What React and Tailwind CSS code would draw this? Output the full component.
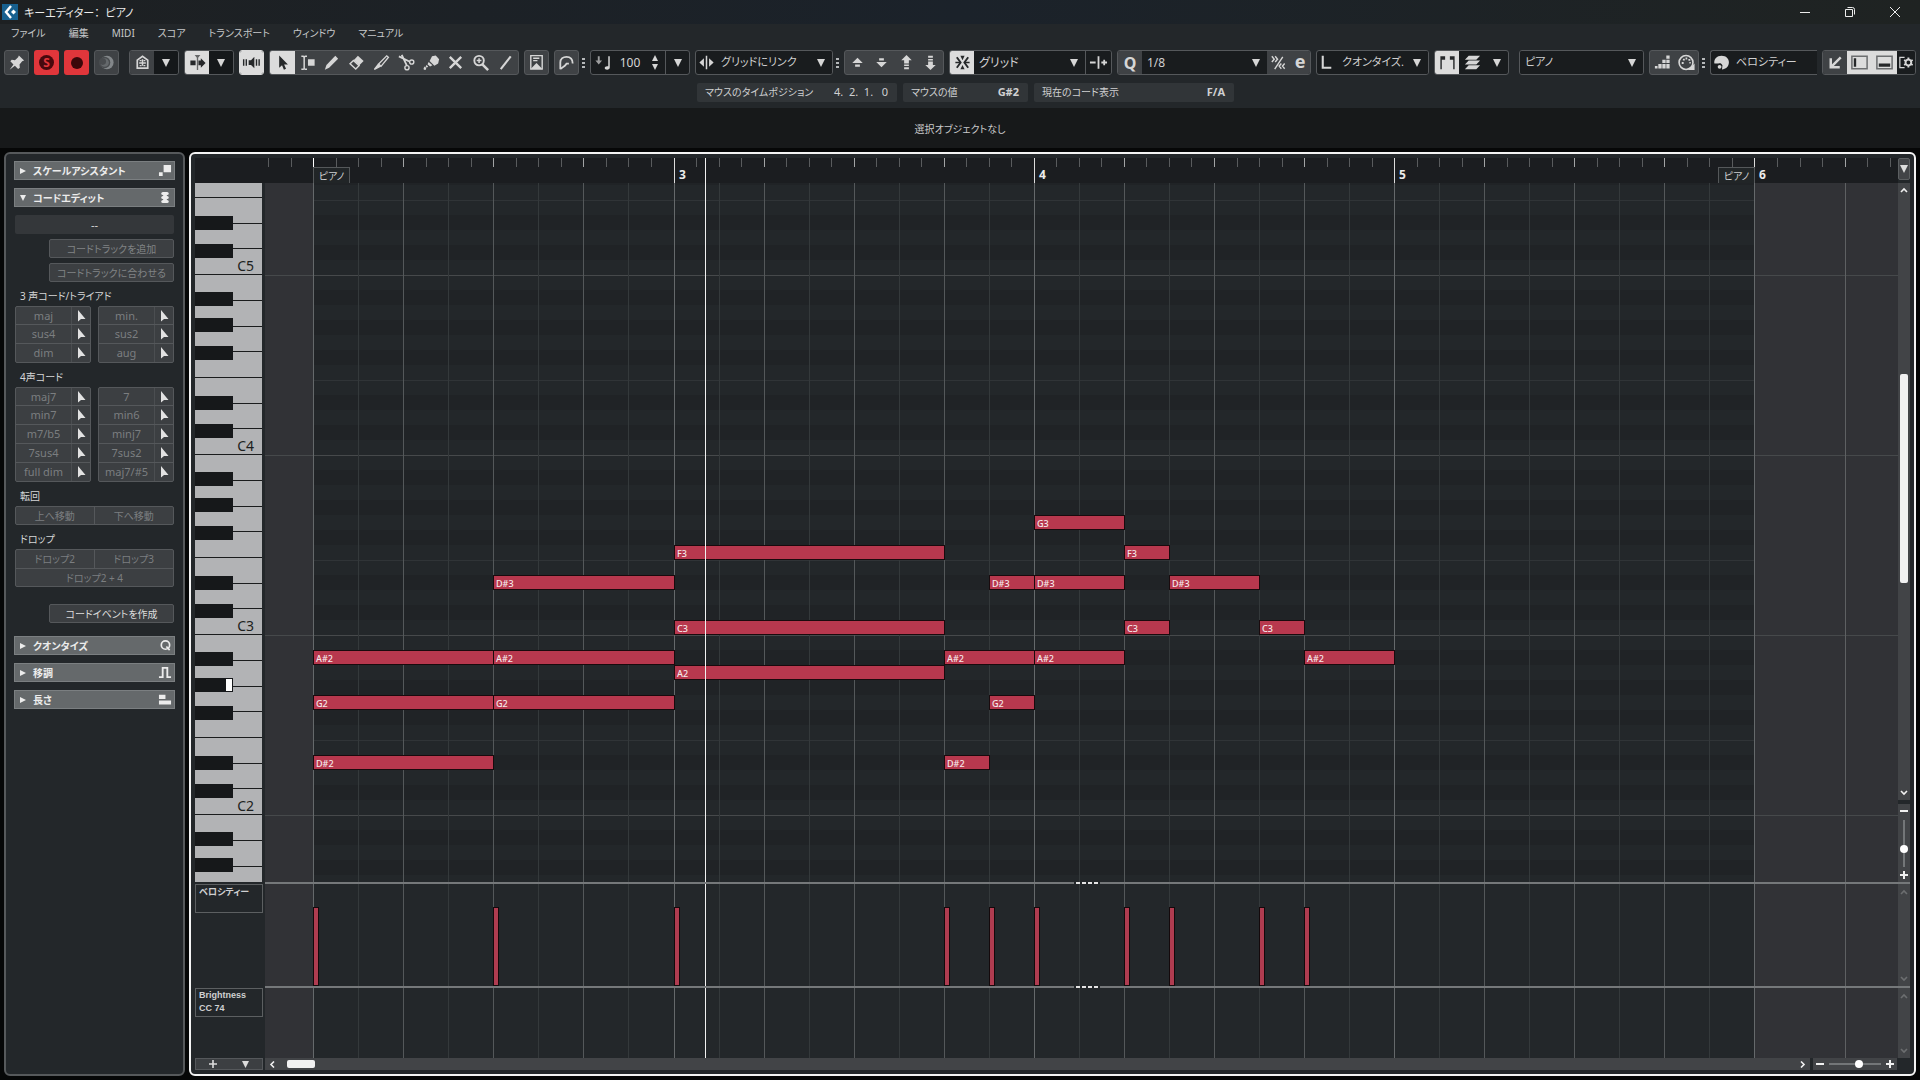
import React from "react";

/* ---------- timeline data ---------- */

const ORIGIN = 48; // left edge of the first bar inside a lane
const EIGHTH = 45.04; // width of an eighth note
const LAST = 32; // end of the part, in eighth notes
const xOf = (n) => ORIGIN + Math.round(n * EIGHTH + 0.2);

// [name, start, length] in eighth notes, row = semitones below B5
const NOTES = [
  ["G3", 16, 2, 28],
  ["F3", 8, 6, 30],
  ["F3", 18, 1, 30],
  ["D#3", 4, 4, 32],
  ["D#3", 15, 1, 32],
  ["D#3", 16, 2, 32],
  ["D#3", 19, 2, 32],
  ["C3", 8, 6, 35],
  ["C3", 18, 1, 35],
  ["C3", 21, 1, 35],
  ["A#2", 0, 4, 37],
  ["A#2", 4, 4, 37],
  ["A#2", 14, 2, 37],
  ["A#2", 16, 2, 37],
  ["A#2", 22, 2, 37],
  ["A2", 8, 6, 38],
  ["G2", 0, 4, 40],
  ["G2", 4, 4, 40],
  ["G2", 15, 1, 40],
  ["D#2", 0, 4, 44],
  ["D#2", 14, 1, 44],
];
const HITS = [0, 4, 8, 14, 15, 16, 18, 19, 21, 22];
const OCTAVES = ["C5", "C4", "C3", "C2", "C1"];
const PITCHES = ["B", "A#", "A", "G#", "G", "F#", "F", "E", "D#", "D", "C#", "C"];

/* ---------- icons, 20 x 20 ---------- */

const ICONS = {
  pin: <path fill="currentColor" d="M12.5 2.5l5.5 5.5-2 .8-2.8 3.2.3 3.5-1.8 1.3-3.4-3.4-5.5 4.3 4-5.7-3.3-3.2 1.5-1.6 3.4.3 3.3-3z" />,
  moon: (
    <g>
      <circle cx="10.5" cy="10" r="7" fill="#83878a" />
      <circle cx="8" cy="10" r="6" fill="#494c4f" />
      <circle cx="8" cy="10" r="4.5" fill="#65696c" />
      <circle cx="6" cy="9" r="3.5" fill="#494c4f" />
    </g>
  ),
  home: (
    <g fill="none" stroke="currentColor" strokeWidth="1.8">
      <path d="M4.5 16V7.5L10 3.5l5.500 4V16z" />
      <path d="M10 6.500v7M6.500 10.500h7" strokeWidth="1.500" />
      <path d="M7 8h2M11 8h2M7 13.200h2M11 13.200h2" strokeWidth="1.300" />
    </g>
  ),
  autoscroll: (
    <g fill="currentColor">
      <path d="M7 2h6l-2.300 3v13H9.300V5z" opacity=".65" />
      <path d="M2.500 8h5.500v5H2.500zM11 8h2.500V5.500l5 5-5 5V13H11z" />
    </g>
  ),
  speaker: (
    <g fill="currentColor">
      <path d="M7 7.500h2.500L13 4v12l-3.500-3.500H7z" />
      <path d="M1 6.500h1.500v7H1zM3.800 6.500h1.500v7H3.800zM14.500 6.500H16v7h-1.500zM17.300 6.500h1.500v7h-1.500z" />
    </g>
  ),
  arrow: <path fill="currentColor" d="M6.500 2.500v13l3-2.500 2 4.500 2.200-1-2-4.300h4z" />,
  range: (
    <g>
      <path d="M3.500 3.500h2l1 .8 1-.8h2M3.500 17h2l1-.8 1 .8h2M6.500 4v12.500" stroke="currentColor" strokeWidth="1.600" fill="none" />
      <path fill="currentColor" d="M10.500 6.500h7v7h-7z" />
    </g>
  ),
  pencil: <path fill="currentColor" d="M3 17.500l1.700-5L14 3l3 3-9.500 9.500z" />,
  eraser: (
    <g>
      <path fill="currentColor" d="M11.500 3l6 5.500L13 13 7 7.500z" />
      <path d="M6.800 7.800l6 5.500-3.600 3.500-6-5.500z" fill="none" stroke="currentColor" strokeWidth="1.500" />
    </g>
  ),
  trim: (
    <g fill="none" stroke="currentColor" strokeWidth="1.400">
      <path d="M7 11.500L15.500 3l1.800 1.500-7.800 9.500z" />
      <path d="M7 11.500l-4.500 5.800 6.500-3.500" fill="currentColor" />
    </g>
  ),
  scissors: (
    <g fill="none" stroke="currentColor" strokeWidth="1.900">
      <path d="M2 3.500l11 5.500M5 2l5.500 11.500" />
      <circle cx="15.500" cy="9.500" r="2.200" strokeWidth="1.500" />
      <circle cx="10.500" cy="15.500" r="2.200" strokeWidth="1.500" />
    </g>
  ),
  glue: (
    <g fill="currentColor">
      <path d="M10.500 3.500l4-1 3.500 4-1 4.500-4 2.500-5-5z" />
      <path d="M7 9.500l4 3.500-2.500 1.200-2.700-2.400zM4.800 12.500l1.700 1.800-1.500 1.200-1.200-1.200zM3 14.300c1.800 1 2 3.200.2 3.700-2.200-.2-1.700-2.200-.2-3.700z" />
    </g>
  ),
  mute: <path d="M4 4l12 12M16 4L4 16" stroke="currentColor" strokeWidth="2.500" />,
  zoom: (
    <g fill="none" stroke="currentColor">
      <circle cx="8.500" cy="8" r="5" strokeWidth="2" />
      <path d="M8.500 5.500v5M6 8h5" strokeWidth="1.600" />
      <path d="M12 12l6 6" strokeWidth="2.600" />
    </g>
  ),
  line: <path d="M5 17L15.500 3.500" stroke="currentColor" strokeWidth="2.200" />,
  score: (
    <g>
      <path d="M4 17V2.800h12V17" fill="none" stroke="currentColor" strokeWidth="1.500" />
      <path d="M6.500 5.500H13M6.500 8H11" stroke="currentColor" strokeWidth="1.500" />
      <path fill="currentColor" d="M3 17.500l7-7 7 7z" />
    </g>
  ),
  curve: <path d="M3.500 17v-7c0-4 3-6 6.500-6 4 0 6.500 2.200 6.500 7M3.500 17l5-3.800 1.500-2h2.500" fill="none" stroke="currentColor" strokeWidth="1.900" />,
  noteIn: (
    <g fill="currentColor">
      <path d="M4 3.500h2V8h2.500L5 12 1.500 8H4z" opacity=".7" />
      <path d="M15 3.500h1.600v11.800c0 1.500-1.200 2.200-2.800 2.200-1.500 0-2.500-.7-2.500-1.800 0-1.400 1.700-2.200 3.700-1.700z" />
    </g>
  ),
  link: (
    <g fill="currentColor">
      <path d="M9.200 3h1.600v14H9.200zM7.300 5.500v9L2.500 10zM12.700 5.500v9l4.800-4.500z" />
    </g>
  ),
  nudgeUp: <path fill="currentColor" d="M10 5l5.500 5.500h-11zM7.500 12h5v2.500h-5z" />,
  nudgeDown: <path fill="currentColor" d="M10 15L4.500 9.500h11zM7.500 5.500h5V8h-5z" />,
  octUp: <path fill="currentColor" d="M10 2l5.500 5.500h-3V11h-5V7.500h-3zM7.500 12.200h5v1.600h-5zM7.500 15h5v2h-5z" />,
  octDown: <path fill="currentColor" d="M10 18l5.500-5.500h-3V9h-5v3.500h-3zM7.500 6.200h5v1.600h-5zM7.500 3h5v2h-5z" />,
  snap: (
    <g fill="currentColor">
      <path d="M10 7.500L7.800 3h4.400zM10 12.500L7.800 17h4.400z" />
      <path d="M4 4.500L8 10l-4 5.500M16 4.500L12 10l4 5.500" fill="none" stroke="currentColor" strokeWidth="2" />
      <path d="M2.500 9.200H8v1.600H2.500zM12 9.200h5.500v1.600H12z" />
    </g>
  ),
  snapType: <path d="M1 10h6M13 10h6M16 7v6M10 3.500v13" stroke="currentColor" strokeWidth="1.900" />,
  length: <path d="M5 3v12.500h9" fill="none" stroke="currentColor" strokeWidth="2.200" />,
  dynamic: (
    <g fill="none" stroke="currentColor" strokeWidth="1.500">
      <path d="M3 3.500l2.500 3L3 9.500M6.500 3.500l2.500 3-2.500 3M6 17L14.500 4M13 11l-2.300 2.800L13 16.500M16.500 11l-2.300 2.800 2.300 2.700" />
    </g>
  ),
  parts: (
    <g fill="currentColor">
      <path d="M2.500 3.500h5V7H4v10H2.500zM12.500 3.500h5V17H16V7h-3.500z" />
    </g>
  ),
  layers: <path fill="currentColor" d="M6 3h12l-4 4H2zM6 8h12l-4 4H2zM6 13h12l-4 4H2z" />,
  steps: <path fill="currentColor" d="M14 2.500h3.500V6H14zM14 7h3.500v3.500H14zM9.800 7h3.500v3.500H9.800zM14 11.700h3.500v4.500H14zM9.800 11.700h3.500v4.500H9.800zM5.600 11.700h3.500v4.500H5.600zM2 13.700h2.800v2.500H2z" />,
  midi: (
    <g>
      <circle cx="9.500" cy="10" r="7.300" fill="none" stroke="currentColor" strokeWidth="1.700" />
      <path fill="currentColor" d="M5 9.500h2v2H5zM6.200 6h2v2h-2zM9 4.800h1.800v2H9zM12 6.200h2v2h-2zM13 9.500h1.500v1.500H13zM18.500 11v7h-7z" />
    </g>
  ),
  palette: (
    <g>
      <path fill="currentColor" d="M10 2.800c5 0 7.800 3 7.800 7 0 4.500-3.500 7.500-7.300 7.500l.5-4.300c-.8-2-2.500-2.500-4.200-2L2.500 11c-.8-4.800 2.800-8.200 7.500-8.200z" />
      <circle cx="8" cy="14.500" r="2" fill="currentColor" />
    </g>
  ),
  corner: <path d="M15.500 4.500L6 14M5 5.500V15h9.500" fill="none" stroke="currentColor" strokeWidth="2.600" />,
  zoneLeft: (
    <g>
      <path d="M2 3.500h16v13H2z" fill="none" stroke="#6c6e70" strokeWidth="1.600" />
      <path fill="currentColor" d="M4 5.500h2.500v9H4z" />
    </g>
  ),
  zoneLow: (
    <g>
      <path d="M2 3.500h16v13H2z" fill="none" stroke="#6c6e70" strokeWidth="1.600" />
      <path fill="currentColor" d="M4 11h12v3.500H4z" />
    </g>
  ),
  setup: (
    <g fill="none" stroke="currentColor">
      <path d="M8 4.500H3v11h5" strokeWidth="1.300" />
      <circle cx="12" cy="10" r="3" strokeWidth="2" />
      <path d="M12 4.800v2M12 13.200v2M7.500 7.400l1.700 1M14.800 11.600l1.700 1M7.500 12.600l1.700-1M14.800 8.400l1.700-1" strokeWidth="2" />
    </g>
  ),
};

function Icon({ name, className = "" }) {
  return (
    <svg viewBox="0 0 20 20" aria-hidden="true" className={`size-[19px] shrink-0 ${className}`}>
      {ICONS[name]}
    </svg>
  );
}

function Caret({ className = "size-2" }) {
  return (
    <svg viewBox="0 0 8 8" aria-hidden="true" className={`shrink-0 ${className}`}>
      <path d="M0 0h8L4 8z" fill="currentColor" />
    </svg>
  );
}

/* ---------- toolbar parts ---------- */

function Group({ className = "", children }) {
  return (
    <div className={`flex h-[25px] shrink-0 overflow-hidden rounded-[3px] border border-[#55585b] ${className}`}>{children}</div>
  );
}

function Tool({ icon, label, on, className = "", children }) {
  return (
    <button
      type="button"
      aria-label={label}
      className={`flex min-w-0 items-center justify-center ${on ? "bg-[#dcdcdc] text-[#26282a]" : "text-[#d6d6d6]"} ${className}`}
    >
      {icon ? <Icon name={icon} /> : children}
    </button>
  );
}

function Single({ icon, label, on }) {
  return (
    <Group className={on ? "w-[25px] border-[#dcdcdc]" : "w-[25px] bg-[#3f4245]"}>
      <Tool icon={icon} label={label} on={on} className="flex-1" />
    </Group>
  );
}

function Choice({ label, value, caret = true, size = "text-[11px]" }) {
  return (
    <div className="relative flex min-w-0 flex-1 items-center bg-[#191c1e]">
      <select aria-label={label} className={`h-full w-full appearance-none bg-transparent pl-[5px] text-[#d0d0d0] outline-none ${size}`}>
        <option>{value}</option>
      </select>
      {caret && <Caret className="pointer-events-none absolute right-[7px] size-2 text-[#d6d6d6]" />}
    </div>
  );
}

function WithDots({ children }) {
  return (
    <div className="flex shrink-0 items-center gap-[3px]">
      {children}
      <span className="flex flex-col gap-[2px]">
        <i className="h-[2px] w-[3px] bg-[#b5b8ba]" />
        <i className="h-[2px] w-[3px] bg-[#b5b8ba]" />
        <i className="h-[2px] w-[3px] bg-[#b5b8ba]" />
      </span>
    </div>
  );
}

const TOOLS = [
  ["arrow", "選択"],
  ["range", "範囲"],
  ["pencil", "鉛筆"],
  ["eraser", "消しゴム"],
  ["trim", "トリム"],
  ["scissors", "はさみ"],
  ["glue", "のり"],
  ["mute", "ミュート"],
  ["zoom", "ズーム"],
  ["line", "ライン"],
];

function Toolbar() {
  return (
    <div className="flex h-[25px] items-center gap-[5px] pl-1">
      <Single icon="pin" label="ピン" />
      <button type="button" aria-label="ソロ" className="flex h-[25px] w-[25px] shrink-0 items-center justify-center rounded-[3px] bg-[#e0363b]">
        <span className="flex size-[15px] items-center justify-center rounded-full bg-[#47090d] text-[12px] leading-none font-bold text-[#e0363b]">S</span>
      </button>
      <button type="button" aria-label="録音" className="flex h-[25px] w-[25px] shrink-0 items-center justify-center rounded-[3px] bg-[#e0363b]">
        <span className="size-[12px] rounded-full bg-[#3a070a]" />
      </button>
      <Single icon="moon" label="レトロスペクティブ" />
      <Group className="ml-[5px] w-[50px]">
        <Tool icon="home" label="ホーム" className="flex-1 bg-[#3f4245]" />
        <Tool label="ホームの設定" className="flex-1 bg-[#15181a]"><Caret /></Tool>
      </Group>
      <Group className="w-[50px]">
        <Tool icon="autoscroll" label="自動スクロール" on className="flex-1" />
        <Tool label="自動スクロールの設定" className="flex-1 bg-[#15181a]"><Caret /></Tool>
      </Group>
      <Single icon="speaker" label="試聴" on />
      <Group className="w-[250px] bg-[#3f4245]">
        {TOOLS.map(([icon, label], i) => (
          <Tool key={icon} icon={icon} label={label} on={i === 0} className="flex-1" />
        ))}
      </Group>
      <Single icon="score" label="スコア" />
      <WithDots>
        <Single icon="curve" label="フィードバック" />
      </WithDots>
      <Group className="w-[100px] bg-[#191c1e] text-[#d6d6d6]">
        <span className="flex w-[24px] items-center justify-center"><Icon name="noteIn" /></span>
        <input aria-label="挿入ベロシティー" defaultValue="100" className="w-[30px] bg-transparent text-center text-[12px] outline-none" />
        <span className="flex w-[20px] flex-col items-center justify-center gap-[3px]">
          <Caret className="h-[6px] w-2 rotate-180" />
          <Caret className="h-[6px] w-2" />
        </span>
        <Tool label="ベロシティーの設定" className="flex-1 border-l border-[#55585b]"><Caret /></Tool>
      </Group>
      <WithDots>
        <Group className="w-[138px] bg-[#191c1e] text-[#d6d6d6]">
          <span className="flex w-[20px] items-center justify-end"><Icon name="link" /></span>
          <Choice label="グリッドリンク" value="グリッドにリンク" />
        </Group>
      </WithDots>
      <Group className="w-[100px] bg-[#3f4245]">
        <Tool icon="nudgeUp" label="上へ移動" className="flex-1" />
        <Tool icon="nudgeDown" label="下へ移動" className="flex-1" />
        <Tool icon="octUp" label="オクターブ上へ" className="flex-1" />
        <Tool icon="octDown" label="オクターブ下へ" className="flex-1" />
      </Group>
      <Group className="w-[163px]">
        <Tool icon="snap" label="スナップ" on className="w-[24px]" />
        <Choice label="スナップタイプ" value="グリッド" size="text-[12px]" />
        <Tool icon="snapType" label="グリッドタイプ" className="w-[26px] border-l border-[#55585b] bg-[#191c1e]" />
      </Group>
      <Group className="w-[194px]">
        <Tool label="クオンタイズ" className="w-[24px] bg-[#3f4245] text-[16px] font-bold">Q</Tool>
        <Choice label="クオンタイズプリセット" value="1/8" size="text-[12px]" />
        <Tool icon="dynamic" label="反復クオンタイズ" className="w-[23px] bg-[#3f4245]" />
        <Tool label="クオンタイズパネル" className="w-[20px] bg-[#3f4245] text-[18px] leading-[20px] font-bold"><span className="-mt-[3px]">e</span></Tool>
      </Group>
      <Group className="w-[113px] bg-[#191c1e] text-[#d6d6d6]">
        <span className="flex w-[20px] items-center justify-center"><Icon name="length" /></span>
        <Choice label="長さクオンタイズ" value="クオンタイズ." />
      </Group>
      <Group className="w-[75px] bg-[#191c1e]">
        <Tool icon="parts" label="パート境界" on className="w-[24px]" />
        <Tool icon="layers" label="パート編集" className="w-[26px]" />
        <Tool label="パート一覧" className="flex-1"><Caret /></Tool>
      </Group>
      <Group className="ml-[5px] w-[125px]">
        <Choice label="編集パート" value="ピアノ" />
      </Group>
      <WithDots>
        <Group className="w-[50px] bg-[#3f4245]">
          <Tool icon="steps" label="ステップ入力" className="flex-1" />
          <Tool icon="midi" label="MIDI 入力" className="flex-1" />
        </Group>
      </WithDots>
      <Group className="w-[107px] rounded-r-none border-r-0 bg-[#191c1e] text-[#d6d6d6]">
        <span className="flex w-[20px] items-center justify-end"><Icon name="palette" className="size-[17px]" /></span>
        <Choice label="イベントカラー" value="ベロシティー" caret={false} />
      </Group>
      <Group className="mr-1 ml-auto w-[94px]">
        <Tool icon="corner" label="下ゾーンで開く" className="w-[24px] bg-[#3f4245]" />
        <Tool icon="zoneLeft" label="左ゾーン" on className="w-[25px]" />
        <Tool icon="zoneLow" label="下ゾーン" on className="w-[25px]" />
        <Tool icon="setup" label="ツールバー設定" className="flex-1 bg-[#191c1e]" />
      </Group>
    </div>
  );
}

function Info({ label, value, className = "", bold }) {
  return (
    <div className={`flex h-[19px] items-center justify-between rounded-[2px] bg-[#313538] pr-[9px] pl-2 text-[#cfd0d1] ${className}`}>
      <span className="text-[10px]">{label}</span>
      <span className={`text-[11px] whitespace-pre ${bold ? "font-bold" : ""}`}>{value}</span>
    </div>
  );
}

/* ---------- inspector ---------- */

const HEAD_ICONS = {
  scale: <path fill="currentColor" d="M6 1h8v8H6zM1 9h4v4H1z" />,
  chord: (
    <g fill="currentColor">
      <rect x="3.500" y="1" width="8" height="3.400" rx="1.700" />
      <rect x="3.500" y="5.300" width="8" height="3.400" rx="1.700" />
      <rect x="3.500" y="9.600" width="8" height="3.400" rx="1.700" />
      <path d="M5.500 3h4v8h-4z" />
    </g>
  ),
  quantize: (
    <g fill="none" stroke="currentColor" strokeWidth="1.800">
      <circle cx="8" cy="6.500" r="4.500" />
      <path d="M9 8l3.500 4" />
    </g>
  ),
  transpose: <path d="M1 12h4V2h5v10h4" fill="none" stroke="currentColor" strokeWidth="2" />,
  length: <path fill="currentColor" d="M1 2h7v4.500H1zM1 8h13v4.500H1z" />,
};

function Head({ title, icon, open }) {
  return (
    <button
      type="button"
      aria-expanded={!!open}
      className="flex h-[19px] w-full shrink-0 items-center border border-[#7b7f81] bg-[#65696b] px-[5px] text-[#ececec]"
    >
      <Caret className={`size-[6px] ${open ? "" : "-rotate-90"}`} />
      <span className="ml-[7px] flex-1 text-left text-[10px] leading-none font-bold">{title}</span>
      <svg viewBox="0 0 15 14" aria-hidden="true" className="-mr-[3px] h-[13px] w-[14px]">{HEAD_ICONS[icon]}</svg>
    </button>
  );
}

function Label({ children }) {
  return <h3 className="flex h-6 shrink-0 items-center px-[5px] pt-1 text-[10px] leading-none text-[#d5d6d7]">{children}</h3>;
}

const cell = "flex items-center justify-center leading-none text-[#7b7e80]";

function ChordColumn({ names }) {
  return (
    <div className="w-[76px] divide-y divide-[#55585b] rounded-[2px] border border-[#55585b] bg-[#3c3f42]">
      {names.map((n, i) => (
        <div key={n} className={`flex ${i === 0 || i === names.length - 1 ? "h-[18px]" : "h-[19px]"}`}>
          <button type="button" className={`${cell} flex-1 pb-px text-[11px]`}>{n}</button>
          <button type="button" aria-label={`${n} をドラッグ`} className="flex w-[19px] items-center justify-center border-l border-[#4b4e51] text-[#e2e2e2]">
            <svg viewBox="0 0 9 12" aria-hidden="true" className="h-3 w-[9px]"><path d="M1 0v11.500l3-2.500h4.500z" fill="currentColor" /></svg>
          </button>
        </div>
      ))}
    </div>
  );
}

function SideButton({ children, on }) {
  return (
    <button
      type="button"
      className={`ml-auto flex h-[19px] w-[125px] shrink-0 items-center justify-center rounded-[2px] border border-[#55585b] bg-[#3c3f42] text-[10px] leading-none ${on ? "text-[#dcdcdc]" : "text-[#808385]"}`}
    >
      {children}
    </button>
  );
}

function Inspector() {
  return (
    <aside className="flex w-[181px] shrink-0 flex-col overflow-hidden rounded-[6px] border-2 border-[#56595b] bg-[#23272a] px-2 pt-[7px]">
      <Head title="スケールアシスタント" icon="scale" />
      <div className="h-2 shrink-0" />
      <Head title="コードエディット" icon="chord" open />
      <div className="flex flex-col px-px pt-2 pb-[13px]">
        <output className="mb-[5px] flex h-[19px] items-center justify-center rounded-[2px] bg-[#34373a] text-[11px] leading-none text-[#d5d6d7]">--</output>
        <SideButton>コードトラックを追加</SideButton>
        <div className="h-[5px]" />
        <SideButton>コードトラックに合わせる</SideButton>
        <Label>3 声コード/トライアド</Label>
        <div className="flex justify-between">
          <ChordColumn names={["maj", "sus4", "dim"]} />
          <ChordColumn names={["min.", "sus2", "aug"]} />
        </div>
        <Label>4声コード</Label>
        <div className="flex justify-between">
          <ChordColumn names={["maj7", "min7", "m7/b5", "7sus4", "full dim"]} />
          <ChordColumn names={["7", "min6", "minj7", "7sus2", "maj7/#5"]} />
        </div>
        <Label>転回</Label>
        <div className="grid h-[19px] grid-cols-2 divide-x divide-[#55585b] rounded-[2px] border border-[#55585b] bg-[#3c3f42]">
          <button type="button" className={`${cell} text-[10px]`}>上へ移動</button>
          <button type="button" className={`${cell} text-[10px]`}>下へ移動</button>
        </div>
        <Label>ドロップ</Label>
        <div className="mb-[17px] grid h-[38px] grid-cols-2 grid-rows-2 rounded-[2px] border border-[#55585b] bg-[#3c3f42]">
          <button type="button" className={`${cell} border-r border-[#55585b] text-[10px]`}>ドロップ2</button>
          <button type="button" className={`${cell} text-[10px]`}>ドロップ3</button>
          <button type="button" className={`${cell} col-span-2 border-t border-[#55585b] text-[10px]`}>ドロップ2 + 4</button>
        </div>
        <SideButton on>コードイベントを作成</SideButton>
      </div>
      <div className="flex flex-col gap-2">
        <Head title="クオンタイズ" icon="quantize" />
        <Head title="移調" icon="transpose" />
        <Head title="長さ" icon="length" />
      </div>
    </aside>
  );
}

/* ---------- editor ---------- */

function VLine({ x, className }) {
  return <i className={`absolute inset-y-0 w-px ${className}`} style={{ left: x }} />;
}

function Playhead() {
  return <VLine x={440} className="z-10 bg-[#f0f0f0]" />;
}

function Lane({ children, rows }) {
  const inside = Array.from({ length: LAST + 1 }, (_, n) => n);
  return (
    <div className="relative min-w-0 flex-1 overflow-hidden bg-[#313236]">
      <div className="absolute inset-y-0 bg-[#23272a]" style={{ left: xOf(0), width: xOf(LAST) - xOf(0) }} />
      {rows}
      {inside.map((n) => (
        <VLine key={n} x={xOf(n)} className={n % 8 === 0 ? "bg-[#65696b]" : n % 2 === 0 ? "bg-[#54585a]" : "bg-[#34393b]"} />
      ))}
      <VLine x={xOf(34)} className="bg-[#5e6062]" />
      {children}
      <Playhead />
    </div>
  );
}

function Rows() {
  return (
    <div className="absolute inset-x-0 -top-[88px]">
      {OCTAVES.map((o) => (
        <div key={o} className="border-t border-[#46494b]">
          {PITCHES.map((p) => (
            <div
              key={p}
              className={p === "B" ? "h-[14px]" : "h-[15px]"}
              style={{ marginLeft: xOf(0), width: xOf(LAST) - xOf(0) }}
            >
              <div className={`h-full ${p.endsWith("#") ? "bg-[#202326]" : p === "E" ? "border-t border-[#303437]" : ""}`} />
            </div>
          ))}
        </div>
      ))}
    </div>
  );
}

const WHITE_KEYS = ["h-[26px]", "h-[26px]", "h-[25px]", "h-[26px]", "h-[26px]", "h-[25px]", "h-[26px]"];
const BLACK_KEYS = ["top-[17px]", "top-[43px]", "top-[71px]", "top-[121px]", "top-[149px]"];

function Keyboard() {
  return (
    <div className="w-[67px] shrink-0 overflow-hidden bg-[#b2b3b5]">
      <div className="-mt-[88px]">
        {OCTAVES.map((o) => (
          <div key={o} className="relative h-[180px]">
            {WHITE_KEYS.map((h, i) => (
              <div key={i} className={`border-b border-[#1a1c1d] pr-2 text-right text-[14px] leading-[34px] text-[#1d1f20] ${h}`}>
                {i === 6 && o !== "C1" ? o : ""}
              </div>
            ))}
            {BLACK_KEYS.map((t, i) => (
              <div key={t} className={`absolute left-0 h-[14px] w-[38px] bg-[#16181a] ${t}`}>
                {o === "C2" && i === 1 && <span className="absolute top-px right-px h-3 w-[6px] bg-white" />}
              </div>
            ))}
          </div>
        ))}
      </div>
    </div>
  );
}

function Notes() {
  return NOTES.map(([name, start, len, row]) => (
    <div
      key={`${name}-${start}`}
      className="absolute flex h-[15px] items-center border border-[#1a0a0d] bg-[#b8384e] pt-px pl-[2px] text-[9px] leading-none font-medium text-[#f6e9eb]"
      style={{ left: xOf(start), top: row * 15 - 88, width: xOf(start + len) - xOf(start) + 1 }}
    >
      {name}
    </div>
  ));
}

function Ruler() {
  const ticks = Array.from({ length: 75 }, (_, i) => i - 2);
  const bars = [["3", 8], ["4", 16], ["5", 24], ["6", 32]];
  const tag = "absolute top-[9px] flex h-4 w-[37px] items-center justify-center border border-b-0 border-[#55585a] bg-[#212527] text-[10px] leading-none text-[#cfd0d1]";
  return (
    <div className="relative min-w-0 flex-1 overflow-hidden bg-[#1b1d20]">
      {ticks.map((t) => (
        <i
          key={t}
          className={`absolute top-0 w-px ${t >= 16 && t % 16 === 0 ? "h-[25px] bg-[#dcdcdc]" : t === 0 ? "h-[9px] bg-white" : t % 4 === 0 ? "h-[9px] bg-[#a2a4a5]" : "h-[9px] bg-[#595b5d]"}`}
          style={{ left: xOf(t / 2) }}
        />
      ))}
      <div className={tag} style={{ left: xOf(0) }}>ピアノ</div>
      <div className={tag} style={{ left: xOf(LAST) - 36 }}>ピアノ</div>
      {bars.map(([n, x]) => (
        <b key={n} className="absolute top-[9px] text-[12px] leading-4 text-[#ececec]" style={{ left: xOf(x) + 5 }}>{n}</b>
      ))}
      <Playhead />
    </div>
  );
}

const CHEVRON = { up: "M1 5l3-3 3 3", down: "M1 2l3 3 3-3", left: "M5 0.500L2 3.500l3 3", right: "M3 0.500l3 3-3 3" };

function Chevron({ dir, label, dim }) {
  return (
    <button type="button" aria-label={label} className={`flex size-3 shrink-0 items-center justify-center ${dim ? "text-[#6c6e70]" : "text-[#f0f0f0]"}`}>
      <svg viewBox="0 0 8 7" aria-hidden="true" className="h-[7px] w-2"><path d={CHEVRON[dir]} fill="none" stroke="currentColor" strokeWidth="1.600" /></svg>
    </button>
  );
}

function ZoomButton({ plus, label }) {
  return (
    <button type="button" aria-label={label} className="flex size-3 shrink-0 items-center justify-center text-[#f0f0f0]">
      <svg viewBox="0 0 8 8" aria-hidden="true" className="size-2"><path d={plus ? "M0 4h8M4 0v8" : "M0 4h8"} stroke="currentColor" strokeWidth="2" /></svg>
    </button>
  );
}

const range =
  "appearance-none bg-transparent outline-none [&::-webkit-slider-thumb]:appearance-none [&::-webkit-slider-thumb]:size-2 [&::-webkit-slider-thumb]:rounded-full [&::-webkit-slider-thumb]:bg-white [&::-webkit-slider-runnable-track]:bg-[linear-gradient(#737678,#737678)] [&::-webkit-slider-runnable-track]:bg-no-repeat [&::-webkit-slider-runnable-track]:bg-center";

function LaneScroll() {
  return (
    <div className="flex w-3 shrink-0 flex-col justify-between bg-[#424447] py-[2px]">
      <Chevron dir="up" label="レーンを上へ" dim />
      <Chevron dir="down" label="レーンを下へ" dim />
    </div>
  );
}

function Divider() {
  return (
    <div className="ml-[70px] flex h-[2px] shrink-0 items-center bg-[#75787a]">
      <div className="ml-[809px] flex h-[2px] gap-[2px] bg-[#23272a] px-[2px]">
        <i className="w-1 bg-[#e4e4e4]" />
        <i className="w-1 bg-[#e4e4e4]" />
        <i className="w-1 bg-[#e4e4e4]" />
        <i className="w-1 bg-[#e4e4e4]" />
      </div>
    </div>
  );
}

function LaneLabel({ children, className = "" }) {
  return (
    <div className="mr-[2px] w-[68px] shrink-0">
      <button type="button" className={`flex h-[29px] w-full items-start border border-[#5c5f61] px-[3px] text-left text-[9px] leading-[13px] font-bold text-[#cfd0d1] ${className}`}>
        {children}
      </button>
    </div>
  );
}

function Editor() {
  return (
    <section aria-label="キーエディター" className="flex min-w-0 flex-1 flex-col rounded-[6px] border-2 border-[#f4f4f4] bg-[#23272a] p-1">
      <div className="flex h-[25px] shrink-0">
        <div className="w-[70px] shrink-0 bg-[#1b1d20]" />
        <Ruler />
        <button type="button" aria-label="ルーラーの設定" className="flex h-[22px] w-3 shrink-0 items-center justify-center rounded-[2px] border border-[#5c5f61] bg-[#424447] text-[#dcdcdc]">
          <Caret />
        </button>
      </div>

      <div className="flex min-h-0 flex-1">
        <Keyboard />
        <div className="w-[3px] shrink-0" />
        <Lane rows={<Rows />}>
          <Notes />
        </Lane>
        <div className="flex w-3 shrink-0 flex-col">
          <div className="flex flex-1 flex-col items-center bg-[#424447] pt-px pb-[2px]">
            <Chevron dir="up" label="上へスクロール" />
            <div className="flex w-full flex-1 flex-col items-center">
              <div className="flex-[178]" />
              <div className="w-2 flex-[209] rounded-[2px] bg-[#f1f1f1]" />
              <div className="flex-[203]" />
            </div>
            <Chevron dir="down" label="下へスクロール" />
          </div>
          <div className="h-1 shrink-0" />
          <div className="flex h-[78px] shrink-0 flex-col items-center justify-between bg-[#424447] py-px">
            <ZoomButton label="縦に縮小" />
            <input
              type="range"
              aria-label="縦ズーム"
              defaultValue="66"
              className={`h-[47px] w-2 [writing-mode:vertical-lr] [&::-webkit-slider-runnable-track]:bg-[length:2px_100%] ${range}`}
            />
            <ZoomButton plus label="縦に拡大" />
          </div>
        </div>
      </div>

      <Divider />
      <div className="flex h-[102px] shrink-0">
        <LaneLabel>ベロシティー</LaneLabel>
        <Lane>
          {HITS.map((n) => (
            <i
              key={n}
              className="absolute bottom-0 h-[79px] w-[6px] border border-[#14090b] bg-[#b03c50]"
              style={{ left: xOf(n) }}
            />
          ))}
        </Lane>
        <LaneScroll />
      </div>
      <Divider />
      <div className="flex h-[70px] shrink-0">
        <LaneLabel className="font-['Liberation_Sans',sans-serif]">Brightness<br />CC 74</LaneLabel>
        <Lane />
        <LaneScroll />
      </div>

      <div className="flex h-3 shrink-0 items-center">
        <div className="mr-[2px] grid h-3 w-[68px] grid-cols-2 border border-[#55585b] bg-[#3c3f42] text-[#dcdcdc]">
          <button type="button" aria-label="レーンを追加" className="flex items-center justify-center">
            <svg viewBox="0 0 8 8" aria-hidden="true" className="size-2"><path d="M0 4h8M4 0v8" stroke="currentColor" strokeWidth="1.600" /></svg>
          </button>
          <button type="button" aria-label="レーンの設定" className="flex items-center justify-center"><Caret className="size-[7px]" /></button>
        </div>
        <div className="flex h-3 flex-1 items-center bg-[#424447] px-[2px]">
          <Chevron dir="left" label="左へスクロール" />
          <div className="flex flex-1 pl-2">
            <div className="h-2 w-[28px] rounded-[2px] bg-[#f1f1f1]" />
          </div>
          <Chevron dir="right" label="右へスクロール" />
        </div>
        <div className="mr-[13px] ml-[3px] flex h-3 w-[84px] items-center justify-between bg-[#424447] px-px">
          <ZoomButton label="横に縮小" />
          <input
            type="range"
            aria-label="横ズーム"
            defaultValue="58"
            className={`h-2 w-[52px] [&::-webkit-slider-runnable-track]:bg-[length:100%_2px] ${range}`}
          />
          <ZoomButton plus label="横に拡大" />
        </div>
      </div>
    </section>
  );
}

/* ---------- window ---------- */

const MENU = ["ファイル", "編集", "MIDI", "スコア", "トランスポート", "ウィンドウ", "マニュアル"];

export default function App() {
  return (
    <div className="flex h-screen min-h-[900px] flex-col overflow-hidden bg-[#060707] font-['Noto_Sans','Noto_Sans_CJK_JP',sans-serif] [font-feature-settings:'palt']">
      <header className="shrink-0 bg-[#23272a]">
        <div className="flex h-6 items-center bg-linear-to-r from-[#1d2022] via-[#1b222a] via-50% to-[#1f2322] pl-[2px]">
          <svg viewBox="0 0 16 16" aria-hidden="true" className="size-4">
            <path fill="#17608f" d="M0 0h16v16H0z" />
            <path d="M9 2L4 8l5 6" fill="none" stroke="#fff" strokeWidth="2.400" />
            <path d="M11.500 5.500L14 8l-2.500 2.500L9 8z" fill="#fff" />
          </svg>
          <h1 className="ml-[6px] whitespace-pre text-[11px] leading-none text-[#ececec]">キーエディター：  ピアノ</h1>
          <div className="ml-auto flex h-full text-[#ececec]">
            <button type="button" aria-label="最小化" className="flex w-[45px] items-center justify-center">
              <svg viewBox="0 0 10 10" className="size-[10px]" aria-hidden="true"><path d="M0 5.500h10" stroke="currentColor" /></svg>
            </button>
            <button type="button" aria-label="元に戻す" className="flex w-[45px] items-center justify-center">
              <svg viewBox="0 0 10 10" className="size-[10px]" aria-hidden="true"><path d="M.5 2.500h7v7h-7zM2.500 .5h5a2 2 0 0 1 2 2v5" fill="none" stroke="currentColor" /></svg>
            </button>
            <button type="button" aria-label="閉じる" className="mr-[3px] flex w-[45px] items-center justify-center">
              <svg viewBox="0 0 10 10" className="size-[10px]" aria-hidden="true"><path d="M0 0l10 10M10 0L0 10" stroke="currentColor" /></svg>
            </button>
          </div>
        </div>
        <nav className="flex h-[26px] gap-[23px] pt-[3px] pl-[11px]">
          {MENU.map((m) => (
            <button key={m} type="button" className="flex h-3 items-center text-[10px] leading-none text-[#c6c8c9]">{m}</button>
          ))}
        </nav>
        <Toolbar />
        <div className="flex justify-center gap-[6px] pt-2 pb-[6px] pl-[11px]">
          <Info label="マウスのタイムポジション" value="4.  2.  1.   0" className="w-[200px]" />
          <Info label="マウスの値" value="G#2" bold className="w-[125px]" />
          <Info label="現在のコード表示" value="F/A" bold className="w-[200px]" />
        </div>
      </header>
      <p className="flex h-10 shrink-0 items-center justify-center bg-[#17191a] pt-px text-[10px] leading-none text-[#c9cacb]">選択オブジェクトなし</p>
      <main className="flex min-h-0 flex-1 gap-1 p-1">
        <Inspector />
        <Editor />
      </main>
    </div>
  );
}
